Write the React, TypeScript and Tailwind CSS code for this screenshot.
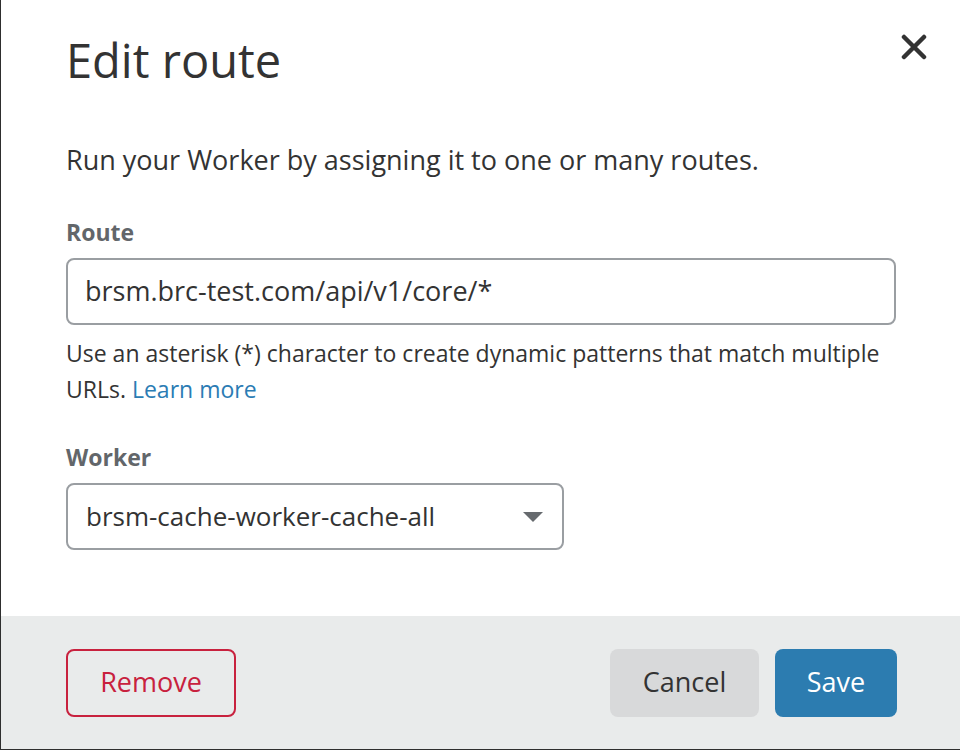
const FONT = "font-['Open_Sans',_'Noto_Sans',_sans-serif]";

const CloseIcon = () => (
  <svg width="26" height="26" viewBox="0 0 26 26" fill="none">
    <path
      d="M3 3 L23 23 M23 3 L3 23"
      stroke="#333333"
      strokeWidth="4.5"
      strokeLinecap="round"
    />
  </svg>
);

const Caret = () => (
  <svg width="20" height="10" viewBox="0 0 20 10">
    <path d="M0 0 H20 L10 10 Z" fill="#666a6e" />
  </svg>
);

const App = () => {
  return (
    <div className={`w-[960px] h-[750px] bg-[#2e2e2e] pl-px pb-px ${FONT}`}>
      <div className="h-full bg-white flex flex-col">
        <div className="flex-1 pl-[65px] pr-[64px]">
          <div className="flex items-start justify-between pt-[31px]">
            <h2 className="text-[47px] leading-[58px] text-[#333333] font-normal">
              Edit route
            </h2>
            <button className="mt-[3px] -mr-[31px]">
              <CloseIcon />
            </button>
          </div>

          <p className="mt-[53px] text-[27px] leading-[36px] text-[#333333]">
            Run your Worker by assigning it to one or many routes.
          </p>

          <label className="block mt-[38px] text-[23px] leading-[32px] font-bold text-[#62666a]">
            Route
          </label>
          <div className="mt-[10px] h-[67px] rounded-lg border-2 border-[#9a9ea2] flex items-center px-[17px] text-[27px] text-[#333333]">
            brsm.brc-test.com/api/v1/core/*
          </div>
          <p className="mt-[10px] text-[23px] leading-[36px] text-[#333333]">
            Use an asterisk (*) character to create dynamic patterns that match
            multiple
            <br />
            URLs. <a className="text-[#2b7cb4]">Learn more</a>
          </p>

          <label className="block mt-[34px] text-[23px] leading-[32px] font-bold text-[#62666a]">
            Worker
          </label>
          <div className="mt-[10px] w-[498px] h-[67px] rounded-lg border-2 border-[#9a9ea2] flex items-center justify-between pl-[18px] pr-[19px] text-[26px] text-[#333333]">
            <span>brsm-cache-worker-cache-all</span>
            <Caret />
          </div>
        </div>

        <div className="h-[133px] bg-[#e9ebeb] flex items-center justify-between pl-[65px] pr-[63px]">
          <button className="h-[68px] w-[170px] rounded-lg border-2 border-[#c8213e] text-[#c8213e] text-[27px]">
            Remove
          </button>
          <div className="flex gap-[16px]">
            <button className="h-[68px] w-[149px] rounded-lg bg-[#d8d9da] text-[#333333] text-[27px]">
              Cancel
            </button>
            <button className="h-[68px] w-[122px] rounded-lg bg-[#2c7cb0] text-white text-[27px]">
              Save
            </button>
          </div>
        </div>
      </div>
    </div>
  );
};

export default App;
